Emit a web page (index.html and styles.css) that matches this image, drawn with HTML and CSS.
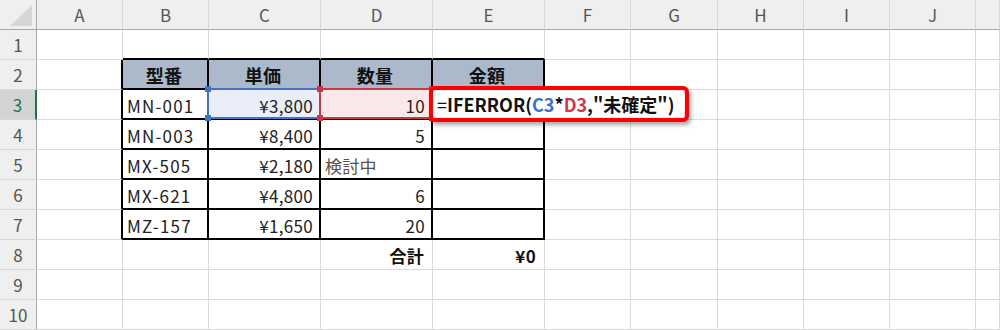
FILE: index.html
```html
<!doctype html>
<html lang="ja">
<head>
    <meta charset="utf-8">
    <title>IFERROR</title>
    <link rel="stylesheet" href="styles.css">
</head>
<body>
    <div class="sheet">
        <div class="corner"></div>
        <div class="ch">A</div><div class="ch">B</div><div class="ch">C</div><div class="ch">D</div><div class="ch">E</div>
        <div class="ch">F</div><div class="ch">G</div><div class="ch">H</div><div class="ch">I</div><div class="ch">J</div><div class="ch"></div>

        <!-- 1 -->
        <div class="rh">1</div>
        <div class="c"></div><div class="c tt"></div><div class="c tt"></div><div class="c tt"></div><div class="c tt"></div>
        <div class="c"></div><div class="c"></div><div class="c"></div><div class="c"></div><div class="c"></div><div class="c"></div>

        <!-- 2 : table head -->
        <div class="rh">2</div>
        <div class="c tl"></div>
        <div class="c t th">型番</div><div class="c t th">単価</div><div class="c t th">数量</div><div class="c t th">金額</div>
        <div class="c"></div><div class="c"></div><div class="c"></div><div class="c"></div><div class="c"></div><div class="c"></div>

        <!-- 3 : row being edited -->
        <div class="rh on">3</div>
        <div class="c tl"></div>
        <div class="c t code">MN-001</div>
        <div class="c t num ref-blue">¥3,800<span class="hd hd-tl"></span><span class="hd hd-tr"></span><span class="hd hd-bl"></span><span class="hd hd-br"></span></div>
        <div class="c t num ref-red">10<span class="hd hd-tl"></span><span class="hd hd-tr"></span><span class="hd hd-bl"></span><span class="hd hd-br"></span></div>
        <div class="c t edit">
            <div class="editor">=<b>IFERROR(<span class="r1">C3</span>*<span class="r2">D3</span>,"未確定")</b></div>
        </div>
        <div class="c"></div><div class="c"></div><div class="c"></div><div class="c"></div><div class="c"></div><div class="c"></div>

        <!-- 4 -->
        <div class="rh">4</div>
        <div class="c tl"></div>
        <div class="c t code">MN-003</div><div class="c t num">¥8,400</div><div class="c t num">5</div><div class="c t"></div>
        <div class="c"></div><div class="c"></div><div class="c"></div><div class="c"></div><div class="c"></div><div class="c"></div>

        <!-- 5 -->
        <div class="rh">5</div>
        <div class="c tl"></div>
        <div class="c t code">MX-505</div><div class="c t num">¥2,180</div><div class="c t note">検討中</div><div class="c t"></div>
        <div class="c"></div><div class="c"></div><div class="c"></div><div class="c"></div><div class="c"></div><div class="c"></div>

        <!-- 6 -->
        <div class="rh">6</div>
        <div class="c tl"></div>
        <div class="c t code">MX-621</div><div class="c t num">¥4,800</div><div class="c t num">6</div><div class="c t"></div>
        <div class="c"></div><div class="c"></div><div class="c"></div><div class="c"></div><div class="c"></div><div class="c"></div>

        <!-- 7 -->
        <div class="rh">7</div>
        <div class="c tl"></div>
        <div class="c t code">MZ-157</div><div class="c t num">¥1,650</div><div class="c t num">20</div><div class="c t"></div>
        <div class="c"></div><div class="c"></div><div class="c"></div><div class="c"></div><div class="c"></div><div class="c"></div>

        <!-- 8 : total -->
        <div class="rh">8</div>
        <div class="c"></div><div class="c"></div><div class="c"></div>
        <div class="c num total">合計</div><div class="c num total">¥0</div>
        <div class="c"></div><div class="c"></div><div class="c"></div><div class="c"></div><div class="c"></div><div class="c"></div>

        <!-- 9 -->
        <div class="rh">9</div>
        <div class="c"></div><div class="c"></div><div class="c"></div><div class="c"></div><div class="c"></div>
        <div class="c"></div><div class="c"></div><div class="c"></div><div class="c"></div><div class="c"></div><div class="c"></div>

        <!-- 10 -->
        <div class="rh">10</div>
        <div class="c"></div><div class="c"></div><div class="c"></div><div class="c"></div><div class="c"></div>
        <div class="c"></div><div class="c"></div><div class="c"></div><div class="c"></div><div class="c"></div><div class="c"></div>
    </div>
</body>
</html>
```

FILE: styles.css
```css
body {
    margin: 0;
    background: #fff;
    font-family: "Noto Sans CJK JP", "Noto Sans", sans-serif;
    color: #222;
    overflow: hidden;
}
.sheet {
    display: grid;
    grid-template-columns: 37px 86px 86px 112px 112px 112px 86px 87px 86px 86px 86px 1fr;
    grid-auto-rows: 30px;
    width: 1000px;
}
.sheet > div {
    box-sizing: border-box;
}

/* headers */
.corner,
.ch,
.rh {
    background: #efefef;
    color: #555;
    font-size: 17px;
    display: flex;
    align-items: center;
    justify-content: center;
}
.corner {
    position: relative;
    border-right: 1px solid #a8a8a8;
    border-bottom: 1px solid #a8a8a8;
}
.corner::after {
    content: "";
    position: absolute;
    left: 10px;
    top: 5px;
    width: 22px;
    height: 21px;
    background: #d6d6d6;
    clip-path: polygon(100% 0, 100% 100%, 0 100%);
}
.ch {
    border-right: 1px solid #d8d8d8;
    border-bottom: 1px solid #a8a8a8;
}
.rh {
    border-right: 1px solid #a8a8a8;
    border-bottom: 1px solid #d8d8d8;
}
.rh.on {
    background: #d3d3d3;
    color: #217346;
    border-right: 2px solid #217346;
}

/* cells */
.c {
    border-right: 1px solid #dadada;
    border-bottom: 1px solid #dadada;
    font-size: 17px;
    display: flex;
    align-items: center;
    padding: 2px 6px 0 4px;
    white-space: nowrap;
    letter-spacing: 0.3px;
}
.c.tl {
    border-right: 2px solid #000;
}
.c.tt {
    border-bottom: 2px solid #000;
}
.c.t {
    border-right: 2px solid #000;
    border-bottom: 2px solid #000;
}
.c.th {
    background: #acb9ca;
    font-weight: bold;
    justify-content: center;
    color: #111;
    font-size: 18px;
}
.code {
    letter-spacing: 1.2px;
}
.num {
    justify-content: flex-end;
}
.note {
    color: #5a5048;
}
.total {
    font-weight: bold;
    color: #111;
    padding-right: 8px;
}

/* formula reference ranges */
.ref-blue,
.ref-red {
    position: relative;
}
.ref-blue {
    background: #e9eef8;
}
.ref-red {
    background: #fbe9e9;
}
.ref-blue::before,
.ref-red::before {
    content: "";
    position: absolute;
    left: -2px;
    top: -2px;
    right: -2px;
    bottom: -1px;
    border: 2px solid #4472c4;
}
.ref-red::before {
    border-color: #c8384c;
}
.hd {
    position: absolute;
    width: 6px;
    height: 6px;
    background: #4472c4;
}
.ref-red .hd {
    background: #c8384c;
}
.hd-tl { left: -4px; top: -4px; }
.hd-tr { right: -4px; top: -4px; }
.hd-bl { left: -4px; bottom: -3px; }
.hd-br { right: -4px; bottom: -3px; }

/* in-cell editor */
.edit {
    position: relative;
}
.editor {
    position: absolute;
    left: -4px;
    top: -4px;
    width: 260px;
    height: 36px;
    box-sizing: border-box;
    border: 4px solid #f00;
    border-radius: 6px;
    background: #fff;
    box-shadow: 2px 3px 4px rgba(0, 0, 0, 0.35), inset 0 0 2px rgba(0, 0, 0, 0.25);
    padding: 1px 0 0 4px;
    font-size: 18px;
    line-height: 26px;
    color: #111;
    letter-spacing: 0;
    z-index: 2;
}
.editor b {
    font-weight: bold;
}
.r1 {
    color: #3a72c8;
}
.r2 {
    color: #cc3a50;
}
```
